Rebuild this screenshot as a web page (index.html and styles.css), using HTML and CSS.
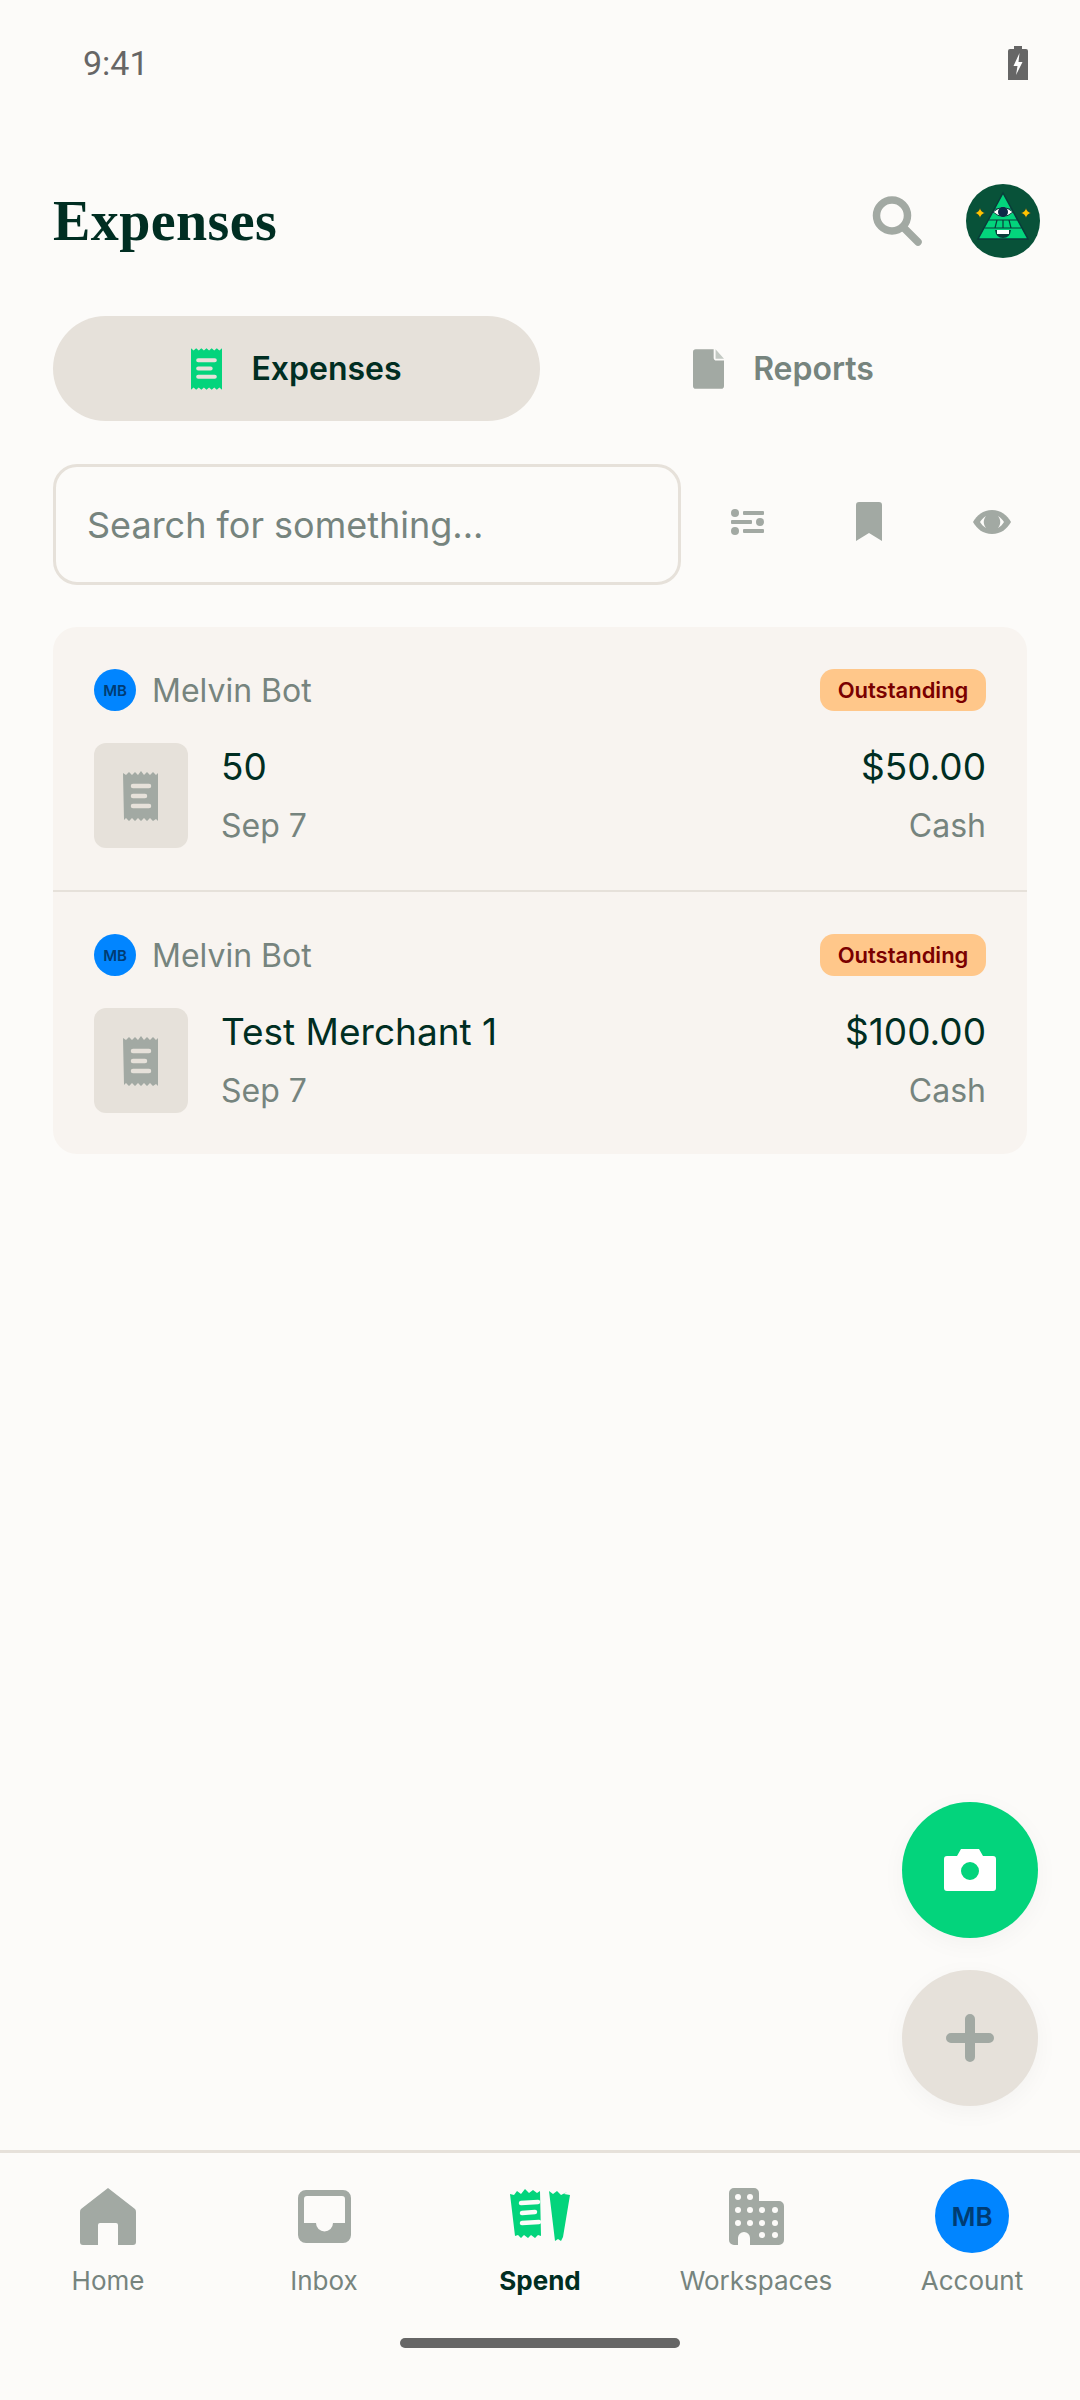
FILE: index.html
```html
<!DOCTYPE html>
<html lang="en">
<head>
<meta charset="utf-8">
<title>Expenses</title>
<link rel="stylesheet" href="styles.css">
</head>
<body>
<div class="app">
  <div class="status">
    <span class="time">9:41</span>
    <svg class="battery" viewBox="0 0 20 34"><path fill="#666" d="M6 0h8v3h4a2 2 0 0 1 2 2v29H0V5a2 2 0 0 1 2-2h4z"/><path fill="#fff" d="M11.5 7 5.5 20h4l-1.5 9 6.500-13h-4z"/></svg>
  </div>
  <header class="header">
    <h1 class="title">Expenses</h1>
    <div class="header-actions">
      <svg class="search-icon" viewBox="0 0 50 50"><circle cx="20" cy="19.500" r="15.500" fill="none" stroke="#A2A9A3" stroke-width="7.500"/><path d="m31 31 15 15" stroke="#A2A9A3" stroke-width="7.500" stroke-linecap="round"/></svg>
      <svg class="logo" viewBox="0 0 74 74">
        <circle cx="37" cy="37" r="37" fill="#085239"/>
        <path d="M37 9 62 55H12z" fill="#03D47C" stroke="#0A3B3A" stroke-width="1.500"/>
        <path d="M28.500 25h17M23 36h28M18.500 44h37M31 36l-2 8M43 36l2 8M37 36v8" stroke="#0A3B3A" stroke-width="1.200" fill="none"/>
        <path d="M27 28q10-9 20 0-10 9-20 0z" fill="#fff" stroke="#0A3B3A" stroke-width="1"/>
        <circle cx="37" cy="28" r="5" fill="#0D2747"/>
        <path d="M29 46h16q-1 8-8 8t-8-8z" fill="#0A3B3A"/><path d="M31 46h12v4H31z" fill="#fff"/>
        <path d="M14 24q1 4 5 5-4 1-5 5-1-4-5-5 4-1 5-5zM60 24q1 4 5 5-4 1-5 5-1-4-5-5 4-1 5-5z" fill="#FFC400" stroke="#0A3B3A" stroke-width=".5"/>
      </svg>
    </div>
  </header>

  <nav class="tabs">
    <div class="tab tab-active">
      <svg class="tab-icon" viewBox="0 0 30 40"><path fill="#03D47C" d="M0 0l2.500 2L5 0l2.500 2L10 0l2.500 2L15 0l2.500 2L20 0l2.500 2L25 0l2.500 2L30 0v40l-2.500-2-2.500 2-2.500-2-2.500 2-2.500-2-2.500 2-2.500-2-2.500 2-2.500-2L5 40l-2.500-2L0 40z"/><path d="M7 11.500h16M7 19.500h12M7 27.500h16" stroke="#E6E1DA" stroke-width="4" stroke-linecap="round"/></svg>
      <span class="tab-label">Expenses</span>
    </div>
    <div class="tab">
      <svg class="tab-icon" viewBox="0 0 33 42"><path fill="#A2A9A3" d="M3 0h19v9a3 3 0 0 0 3 3h8v27a3 3 0 0 1-3 3H3a3 3 0 0 1-3-3V3a3 3 0 0 1 3-3z"/><path fill="#C3C9C3" d="M24 0l9 10h-9z"/></svg>
      <span class="tab-label tab-label-muted">Reports</span>
    </div>
  </nav>

  <div class="tools">
    <div class="search-box">Search for something...</div>
    <div class="tool-icons">
      <svg class="tool-sliders" viewBox="0 0 34 26"><g fill="#A2A9A3"><circle cx="4" cy="4" r="4"/><rect x="12" y="2" width="21" height="4" rx="1"/><rect y="11" width="21" height="4" rx="1"/><circle cx="29" cy="13" r="4"/><circle cx="4" cy="22" r="4"/><rect x="12" y="20" width="21" height="4" rx="1"/></g></svg>
      <svg class="tool-bookmark" viewBox="0 0 26 39"><path fill="#A2A9A3" d="M3 0h20a3 3 0 0 1 3 3v36l-13-8L0 39V3a3 3 0 0 1 3-3z"/></svg>
      <svg class="tool-eye" viewBox="0 0 38 24"><path fill="#A2A9A3" d="M19 0c9 0 15 5 19 12-4 7-10 12-19 12S4 19 0 12C4 5 10 0 19 0z"/><path fill="#FCFBF9" d="M7 12c1.500-2.500 3.500-4.500 6-6-3 4-3 8 0 12-2.500-1.500-4.500-3.500-6-6zM31 12c-1.500-2.500-3.500-4.500-6-6 3 4 3 8 0 12 2.500-1.500 4.500-3.500 6-6z"/></svg>
    </div>
  </div>

  <section class="card">
    <article class="row">
      <div class="row-top">
        <span class="mini-avatar">MB</span>
        <span class="person">Melvin Bot</span>
        <span class="badge">Outstanding</span>
      </div>
      <div class="row-main">
        <div class="thumb"><svg class="thumb-icon" viewBox="0 0 36 50"><path fill="#A2A9A3" d="M0 2l3 2 3-3 3 3 3-3 3 3 3-4 3 4 3-3 3 3 3-3 3 3 2-2v48l-2-2-3 2-3-3-3 3-3-3-3 3-3-3-3 3-3-3-3 3-3-3-2 2z"/><path d="M10 15h16M10 25h12M10 35h16" stroke="#E6E1DA" stroke-width="4.500" stroke-linecap="round"/></svg></div>
        <div class="info">
          <div class="merchant">50</div>
          <div class="sub">Sep 7</div>
        </div>
        <div class="money">
          <div class="amount">$50.00</div>
          <div class="sub">Cash</div>
        </div>
      </div>
    </article>
    <article class="row row-second">
      <div class="row-top">
        <span class="mini-avatar">MB</span>
        <span class="person">Melvin Bot</span>
        <span class="badge">Outstanding</span>
      </div>
      <div class="row-main">
        <div class="thumb"><svg class="thumb-icon" viewBox="0 0 36 50"><path fill="#A2A9A3" d="M0 2l3 2 3-3 3 3 3-3 3 3 3-4 3 4 3-3 3 3 3-3 3 3 2-2v48l-2-2-3 2-3-3-3 3-3-3-3 3-3-3-3 3-3-3-3 3-3-3-2 2z"/><path d="M10 15h16M10 25h12M10 35h16" stroke="#E6E1DA" stroke-width="4.500" stroke-linecap="round"/></svg></div>
        <div class="info">
          <div class="merchant">Test Merchant 1</div>
          <div class="sub">Sep 7</div>
        </div>
        <div class="money">
          <div class="amount">$100.00</div>
          <div class="sub">Cash</div>
        </div>
      </div>
    </article>
  </section>

  <div class="spacer"></div>

  <footer class="nav">
    <div class="nav-item">
      <div class="nav-icon"><svg class="icon-home" viewBox="0 0 56 57"><path fill="#A2A9A3" d="M28 0 55 21q1 1 1 3v30a3 3 0 0 1-3 3H38V37a2 2 0 0 0-2-2H20a2 2 0 0 0-2 2v20H3a3 3 0 0 1-3-3V24q0-2 1-3z"/></svg></div>
      <span class="nav-label">Home</span>
    </div>
    <div class="nav-item">
      <div class="nav-icon"><svg class="icon-inbox" viewBox="0 0 53 53"><path fill="#A2A9A3" fill-rule="evenodd" d="M8 0h37a8 8 0 0 1 8 8v37a8 8 0 0 1-8 8H8a8 8 0 0 1-8-8V8a8 8 0 0 1 8-8zM9 6a3 3 0 0 0-3 3v24h12a8.500 8.500 0 0 0 17 0h12V9a3 3 0 0 0-3-3z"/></svg></div>
      <span class="nav-label">Inbox</span>
    </div>
    <div class="nav-item">
      <div class="nav-icon"><svg class="icon-spend" viewBox="0 0 60 56"><path fill="#03D47C" d="M0 6l4 1 3-4 4 3 4-5 4 4 4-3 4 3 3-2 1 45-3-1-3 3-4-3-3 3-4-3-3 3-3-3-3 1z"/><path d="M11 15l17-1M12 25l13-1M12 35l17-1" stroke="#FCFBF9" stroke-width="4.500" stroke-linecap="round"/><path fill="#03D47C" d="M39 3l4 3 4-3 4 4 6-3-3 2 6 1-7 42-2 4-3-2-3 2z"/><path fill="#FCFBF9" d="M32 4h3l7 46-2 2z"/></svg></div>
      <span class="nav-label nav-label-active">Spend</span>
    </div>
    <div class="nav-item">
      <div class="nav-icon"><svg class="icon-work" viewBox="0 0 55 57"><path fill="#A2A9A3" d="M5 0h20a5 5 0 0 1 5 5v8h20a5 5 0 0 1 5 5v34a5 5 0 0 1-5 5H21V50a6 6 0 0 0-12 0v7H5a5 5 0 0 1-5-5V5a5 5 0 0 1 5-5z"/><g fill="#FCFBF9"><circle cx="9" cy="9" r="3"/><circle cx="21" cy="9" r="3"/><circle cx="9" cy="22" r="3"/><circle cx="21" cy="22" r="3"/><circle cx="33" cy="22" r="3"/><circle cx="46" cy="22" r="3"/><circle cx="9" cy="35" r="3"/><circle cx="21" cy="35" r="3"/><circle cx="33" cy="35" r="3"/><circle cx="46" cy="35" r="3"/><circle cx="33" cy="47" r="3"/><circle cx="46" cy="47" r="3"/></g></svg></div>
      <span class="nav-label">Workspaces</span>
    </div>
    <div class="nav-item">
      <div class="nav-icon"><span class="nav-avatar">MB</span></div>
      <span class="nav-label">Account</span>
    </div>
  </footer>
  <div class="home-wrap"><div class="home-bar"></div></div>

  <button class="fab fab-camera"><svg class="fab-cam-icon" viewBox="0 0 52 42"><path fill="#fff" fill-rule="evenodd" d="M17 0h18l4 7h10a3 3 0 0 1 3 3v29a3 3 0 0 1-3 3H3a3 3 0 0 1-3-3V10a3 3 0 0 1 3-3h10zM26 13a9 9 0 1 0 0 18 9 9 0 0 0 0-18z"/></svg></button>
  <button class="fab fab-plus"><svg class="fab-plus-icon" viewBox="0 0 48 48"><path d="M24 5v38M5 24h38" stroke="#A2A9A3" stroke-width="10" stroke-linecap="round"/></svg></button>
</div>
</body>
</html>
```

FILE: styles.css
```css
* { box-sizing: border-box; }
html, body { margin: 0; padding: 0; }
body { background: #FCFBF9; font-family: Inter, "Liberation Sans", sans-serif; color: #002E22; }
.app { position: relative; width: 1080px; height: 2400px; display: flex; flex-direction: column; overflow: hidden; }

.status { height: 126px; flex: none; padding: 0 53px 0 83px; display: flex; align-items: center; justify-content: space-between; }
.time { font-family: Roboto, sans-serif; font-size: 34px; color: #666; }
.battery { width: 20px; height: 34px; margin-right: -1px; }

.header { height: 190px; flex: none; padding: 0 53px; display: flex; align-items: center; justify-content: space-between; }
.title { margin: 0; font-family: "Liberation Serif", serif; font-weight: 700; font-size: 56px; letter-spacing: 0.4px; color: #002E22; }
.header-actions { display: flex; align-items: center; gap: 44px; }
.search-icon { width: 50px; height: 50px; }
.logo { width: 74px; height: 74px; margin-right: -13px; }

.tabs { display: flex; flex: none; height: 105px; padding: 0 53px; gap: 0; }
.tab { width: 501px; display: flex; align-items: center; justify-content: center; gap: 29px; border-radius: 53px; }
.tab-active { background: #E6E1DA; }
.tab-icon { width: 31px; height: 42px; }
.tab-label { font-size: 32px; font-weight: 600; color: #002E22; }
.tab-label-muted { color: #76847E; }

.tools { display: flex; flex: none; margin-top: 43px; padding: 0 53px; align-items: center; }
.search-box { width: 628px; height: 121px; border: 3px solid #E6E1DA; border-radius: 24px; padding: 0 31px; display: flex; align-items: center; font-size: 36px; color: #76847E; }
.tool-icons { flex: 1; display: flex; align-items: center; justify-content: space-around; margin-top: -6px; margin-right: -30px; padding-left: 4px; }
.tool-sliders { width: 34px; height: 26px; }
.tool-bookmark { width: 26px; height: 39px; }
.tool-eye { width: 38px; height: 24px; }

.card { flex: none; margin: 42px 53px 0; background: #F8F4F0; border-radius: 24px; }
.row { height: 263px; padding: 42px 41px 0; }
.row-second { height: 264px; border-top: 2px solid #E6E1DA; }
.row-top { display: flex; align-items: center; gap: 16px; height: 42px; }
.mini-avatar { width: 42px; height: 42px; border-radius: 50%; background: #0185FF; color: #003C73; font-size: 15px; font-weight: 600; display: flex; align-items: center; justify-content: center; }
.person { font-size: 32px; color: #76847E; flex: 1; }
.badge { width: 166px; height: 42px; border-radius: 14px; background: #FFC78A; color: #7A0000; font-size: 22px; font-weight: 600; display: flex; align-items: center; justify-content: center; }
.row-main { display: flex; margin-top: 32px; height: 105px; }
.thumb { width: 94px; height: 105px; background: #E6E1DA; border-radius: 12px; display: flex; align-items: center; justify-content: center; }
.thumb-icon { width: 36px; height: 50px; }
.info { flex: 1; margin-left: 33px; display: flex; flex-direction: column; justify-content: space-between; }
.money { display: flex; flex-direction: column; justify-content: space-between; align-items: flex-end; }
.merchant, .amount { font-size: 37px; line-height: 48px; color: #002E22; }
.sub { font-size: 32px; line-height: 44px; color: #76847E; }

.spacer { flex: 1; }

.nav { flex: none; height: 173px; padding: 26px 0 0; border-top: 3px solid #E6E1DA; display: grid; grid-template-columns: repeat(5, 216px); }
.nav-item { display: flex; flex-direction: column; align-items: center; }
.nav-icon { height: 74px; display: flex; align-items: center; justify-content: center; }
.icon-home { width: 56px; height: 57px; }
.icon-inbox { width: 53px; height: 53px; }
.icon-spend { width: 60px; height: 56px; }
.icon-work { width: 55px; height: 57px; }
.nav-avatar { width: 74px; height: 74px; border-radius: 50%; background: #0185FF; color: #003C73; font-size: 26px; font-weight: 600; display: flex; align-items: center; justify-content: center; }
.nav-label { margin-top: 10px; font-size: 26px; line-height: 36px; color: #76847E; }
.nav-label-active { font-weight: 700; color: #002E22; }

.home-wrap { flex: none; height: 77px; display: flex; justify-content: center; padding-top: 15px; margin-top: 0; }
.home-bar { width: 280px; height: 10px; border-radius: 5px; background: #666; }

.fab { position: absolute; left: 902px; width: 136px; height: 136px; border: none; padding: 0; border-radius: 50%; display: flex; align-items: center; justify-content: center; box-shadow: 0 6px 24px rgba(0,0,0,.04); }
.fab-camera { top: 1802px; background: #03D47C; }
.fab-plus { top: 1970px; background: #E6E1DA; }
.fab-cam-icon { width: 52px; height: 42px; }
.fab-plus-icon { width: 48px; height: 48px; }
```
